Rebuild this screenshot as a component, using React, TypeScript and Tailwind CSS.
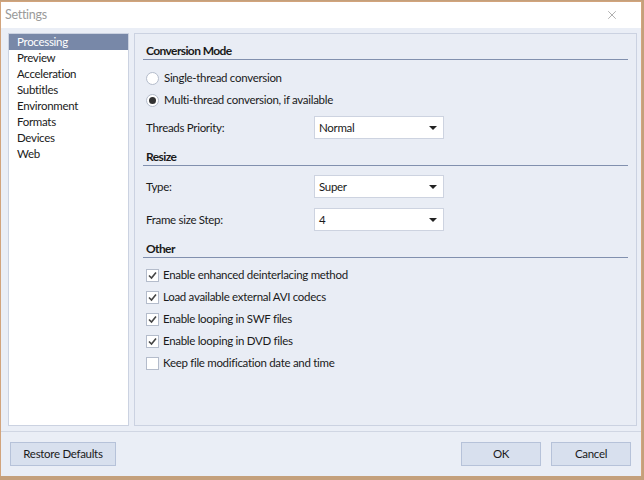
import { X } from "lucide-react";

const font = { fontFamily: 'Lato, "Noto Sans", sans-serif' };

function Section({ title }: { title: string }) {
  return (
    <div className="mr-[5px] h-[19px] border-b border-[#8190ae] pl-[3px] pt-[1px] text-[12px] font-bold leading-[18px] tracking-[-0.6px] text-[#1a1a1a]">
      {title}
    </div>
  );
}

function Radio({ label, checked }: { label: string; checked?: boolean }) {
  return (
    <div className="flex h-[22px] items-center gap-[5px] pl-[3px]">
      <span className="flex h-[13px] w-[13px] items-center justify-center rounded-full border border-[#b4bccb] bg-white">
        {checked && <span className="h-[7px] w-[7px] rounded-full bg-[#333]" />}
      </span>
      <span>{label}</span>
    </div>
  );
}

function Check({ label, checked }: { label: string; checked?: boolean }) {
  return (
    <div className="flex h-[22px] items-center gap-[4px] pl-[3px]">
      <span className="flex h-[13px] w-[13px] items-center justify-center border border-[#b4bccb] bg-white">
        {checked && (
          <svg width="9" height="9" viewBox="0 0 9 9">
            <path d="M1 4.5 L3.5 7 L8 1.5" stroke="#444" strokeWidth="1.6" fill="none" />
          </svg>
        )}
      </span>
      <span>{label}</span>
    </div>
  );
}

function Select({ label, value }: { label: string; value: string }) {
  return (
    <div className="flex h-[33px] items-center pl-[3px]">
      <span className="w-[168px]">{label}</span>
      <div className="flex h-[23px] w-[130px] items-center justify-between border border-[#cdd3e0] bg-white pl-[4px] pr-[6px]">
        <span>{value}</span>
        <svg width="8" height="4" viewBox="0 0 8 4">
          <path d="M0 0 H8 L4 4 Z" fill="#222" />
        </svg>
      </div>
    </div>
  );
}

const menu = ["Processing", "Preview", "Acceleration", "Subtitles", "Environment", "Formats", "Devices", "Web"];

export default function App() {
  return (
    <div className="h-[480px] w-[644px] bg-[#c4a07c] pt-[1px]" style={font}>
      <div className="flex h-[475px] w-[642px] flex-col border-x border-t border-[#d2a47c] bg-[#eaeef6] text-[11.5px] tracking-[-0.3px] text-[#1a1a1a]">
        <div className="flex h-[26px] items-center justify-between bg-white pl-[4px] pr-[22px] text-[12.5px] text-[#9a9a9a]">
          <span>Settings</span>
          <X size={14} strokeWidth={1} className="text-[#777]" />
        </div>
        <div className="flex h-[398px] gap-[5px] pl-[7px] pr-[4px] pt-[5px]">
          <div className="w-[121px] border border-[#cbd2e1] bg-white">
            {menu.map((m, i) => (
              <div
                key={m}
                className={`h-[16px] pl-[8px] leading-[16px] ${i === 0 ? "bg-[#7888a8] text-white" : ""}`}
              >
                {m}
              </div>
            ))}
          </div>
          <div className="flex-1 border border-[#cbd2e1] bg-[#e9edf5] pl-[8px] pr-[3px] pt-[7px]">
            <Section title="Conversion Mode" />
            <div className="pt-[7px]">
              <Radio label="Single-thread conversion" />
              <Radio label="Multi-thread conversion, if available" checked />
            </div>
            <Select label="Threads Priority:" value="Normal" />
            <div className="pt-[3px]">
              <Section title="Resize" />
            </div>
            <div className="pt-[4px]">
              <Select label="Type:" value="Super" />
              <Select label="Frame size Step:" value="4" />
            </div>
            <div className="pt-[3px]">
              <Section title="Other" />
            </div>
            <div className="pt-[6px]">
              <Check label="Enable enhanced deinterlacing method" checked />
              <Check label="Load available external AVI codecs" checked />
              <Check label="Enable looping in SWF files" checked />
              <Check label="Enable looping in DVD files" checked />
              <Check label="Keep file modification date and time" />
            </div>
          </div>
        </div>
        <div className="mt-[5px] border-t border-[#d0d6e3]" />
        <div className="flex items-center justify-between pl-[9px] pr-[10px] pt-[10px]">
          <button className="h-[24px] w-[106px] border border-[#b6c2d9] bg-[#d8e0ee]">
            Restore Defaults
          </button>
          <div className="flex gap-[10px]">
            <button className="h-[24px] w-[80px] border border-[#b6c2d9] bg-[#d8e0ee]">OK</button>
            <button className="h-[24px] w-[80px] border border-[#b6c2d9] bg-[#d8e0ee]">Cancel</button>
          </div>
        </div>
      </div>
    </div>
  );
}
